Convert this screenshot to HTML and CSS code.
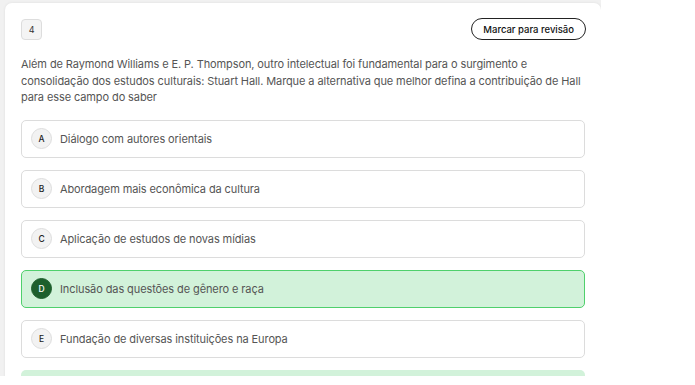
FILE: index.html
```html
<!DOCTYPE html>
<html>
	<head>
		<meta charset="UTF-8">
		<meta name="viewport" content="width=device-width, initial-scale=1">
		<title>Questão 4</title>
		<link rel="stylesheet" href="styles.css">
	</head>
	<body>
		<div class="frame">
			<section class="card">
				<header class="card-head">
					<span class="number">4</span>
					<button class="review" type="button">Marcar para revisão</button>
				</header>
				<p class="statement">
					Além de Raymond Williams e E. P. Thompson, outro intelectual foi fundamental para o surgimento e consolidação dos estudos culturais: Stuart Hall. Marque a alternativa que melhor defina a contribuição de Hall para esse campo do saber
				</p>
				<ul class="options">
					<li class="option"><span class="letter">A</span>Diálogo com autores orientais</li>
					<li class="option"><span class="letter">B</span>Abordagem mais econômica da cultura</li>
					<li class="option"><span class="letter">C</span>Aplicação de estudos de novas mídias</li>
					<li class="option correct"><span class="letter">D</span>Inclusão das questões de gênero e raça</li>
					<li class="option"><span class="letter">E</span>Fundação de diversas instituições na Europa</li>
				</ul>
				<div class="feedback">&nbsp;</div>
			</section>
		</div>
	</body>
</html>
```

FILE: styles.css
```css
*, *:before, *:after {
	box-sizing: border-box;
}
html {
	font-family: Inter, "Liberation Sans", sans-serif;
	font-size: 11px;
	letter-spacing: -0.1px;
}
body {
	margin: 0;
	background: #fff;
	color: #555;
}
.frame {
	width: 601px;
	height: 376px;
	overflow: hidden;
	background: #f1f1f1;
	padding: 3px 0 0 5px;
}
.card {
	background: #fff;
	border-radius: 7px 7px 0 0;
	padding: 15px 16px 16px;
	height: 400px;
	box-shadow: 0 0 3px rgba(0,0,0,.08);
}
.card-head {
	display: flex;
	justify-content: space-between;
	align-items: center;
}
.number {
	display: flex;
	align-items: center;
	justify-content: center;
	width: 21px;
	height: 21px;
	border: 1px solid #ddd;
	border-radius: 4px;
	background: #f4f4f4;
	color: #333;
	font-size: 9px;
}
.review {
	font-family: inherit;
	font-size: 9.5px;
	font-weight: 500;
	letter-spacing: 0;
	color: #111;
	background: #fff;
	border: 1px solid #222;
	border-radius: 11px;
	height: 22px;
	padding: 0 11px;
	margin-right: -1px;
}
.statement {
	margin: 16px 0 14px;
	line-height: 16.5px;
	color: #555;
}
.options {
	list-style: none;
	margin: 0;
	padding: 0;
	display: flex;
	flex-direction: column;
	gap: 12px;
}
.option {
	display: flex;
	align-items: center;
	gap: 8px;
	height: 38px;
	padding: 0 9px;
	border: 1px solid #dcdcdc;
	border-radius: 5px;
	background: #fff;
}
.letter {
	display: flex;
	align-items: center;
	justify-content: center;
	width: 21px;
	height: 21px;
	border-radius: 50%;
	border: 1px solid #ddd;
	background: #f2f2f2;
	color: #222;
	font-size: 8.5px;
	font-weight: 500;
	letter-spacing: 0;
}
.option.correct {
	background: #d2f2da;
	border-color: #4fd06c;
}
.option.correct .letter {
	background: #1d5f2c;
	border-color: #1d5f2c;
	color: #fff;
}
.feedback {
	margin-top: 12px;
	height: 40px;
	border-radius: 5px;
	background: #d2f2da;
}
```
